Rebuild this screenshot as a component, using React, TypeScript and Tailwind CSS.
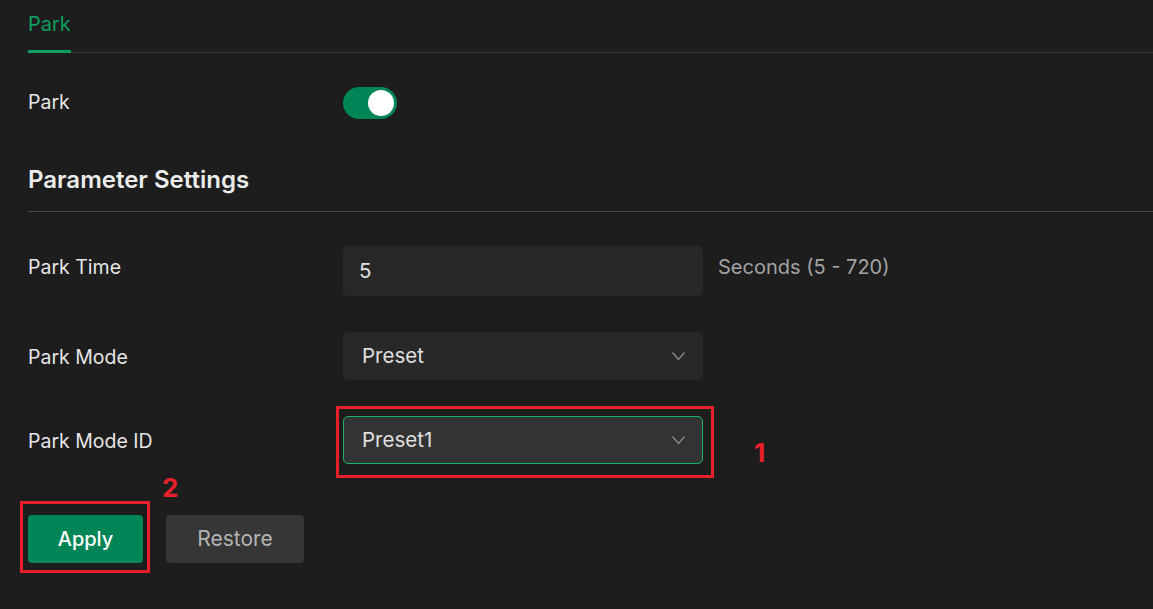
const FONT = { fontFamily: 'Inter, "Noto Sans", sans-serif' };

function Row({ label, children, className, labelClassName }: { label: string; children: React.ReactNode; className?: string; labelClassName?: string }) {
  return (
    <div className={`flex ${className ?? 'items-center'}`}>
      <div className={`w-[315px] shrink-0 text-[19.5px] text-[#e6e6e6] ${labelClassName ?? ''}`}>{label}</div>
      {children}
    </div>
  );
}

function Chevron() {
  return (
    <svg width="15" height="10" viewBox="0 0 15 10" fill="none" className="text-[#8c8c8c]">
      <polyline points="1.5,1.5 7.5,8.5 13.5,1.5" stroke="currentColor" strokeWidth="1.3" />
    </svg>
  );
}

function Select({ value, active }: { value: string; active?: boolean }) {
  return (
    <div
      className={
        active
          ? 'flex h-[48px] w-[360px] items-center justify-between rounded-[5px] border border-[#1db36a] bg-[#333333] pl-[18px] pr-[16px]'
          : 'flex h-[48px] w-[360px] items-center justify-between rounded-[5px] bg-[#282828] pl-[19px] pr-[17px]'
      }
    >
      <span className="text-[20.5px] text-[#e0e0e0]">{value}</span>
      <Chevron />
    </div>
  );
}

export default function App() {
  return (
    <div className="h-[609px] w-[1153px] overflow-hidden bg-[#1d1d1d] pl-[28px]" style={FONT}>
      {/* Tabs */}
      <div className="flex h-[53px] border-b border-[#3b3b3b]">
        <div className="-mb-px border-b-[3px] border-[#0d9f5f] pt-[11px] text-[20px] leading-[26px] text-[#0d9f5f]">Park</div>
      </div>

      <Row label="Park" className="mt-[33px] h-[34px] items-center">
        <button className="flex h-[32px] w-[54px] items-center justify-end rounded-full bg-[#008556] pr-[3px]">
          <span className="h-[26px] w-[26px] rounded-full bg-white" />
        </button>
      </Row>

      {/* Section */}
      <div className="mt-[45px] border-b border-[#454545] pb-[16px] text-[24px] font-semibold leading-[30px] text-[#ececec]">
        Parameter Settings
      </div>

      <Row label="Park Time" className="mt-[34px] items-start" labelClassName="pt-[7px]">
        <div className="flex h-[50px] w-[360px] items-center rounded-[5px] bg-[#282828] pl-[16px] text-[20.5px] text-[#e0e0e0]">5</div>
        <span className="ml-[15px] mt-[6px] text-[20px] text-[#a3a3a3]">Seconds (5 - 720)</span>
      </Row>

      <Row label="Park Mode" className="mt-[36px] items-center" labelClassName="pt-[3px]">
        <Select value="Preset" />
      </Row>

      <Row label="Park Mode ID" className="mt-[36px] items-center" labelClassName="pt-[3px]">
        <div className="relative">
          <Select value="Preset1" active />
          <div className="pointer-events-none absolute -bottom-[14px] -left-[7px] -right-[11px] -top-[10px] border-[3px] border-[#e8202a]" />
          <span className="absolute left-[411px] top-[17px] text-[26px] font-bold text-[#e8202a]">1</span>
        </div>
      </Row>

      {/* Actions */}
      <div className="mt-[51px] flex gap-[23px]">
        <div className="relative">
          <button className="h-[48px] w-[115px] rounded-[4px] bg-[#008556] text-[20px] font-medium text-white">Apply</button>
          <div className="pointer-events-none absolute -bottom-[10px] -left-[8px] -right-[7px] -top-[14px] border-[3px] border-[#e8202a]" />
          <span className="absolute -top-[47px] left-[134px] text-[26px] font-bold text-[#e8202a]">2</span>
        </div>
        <button className="h-[48px] w-[138px] rounded-[4px] bg-[#363636] text-[21px] text-[#b4b4b4]">Restore</button>
      </div>
    </div>
  );
}
